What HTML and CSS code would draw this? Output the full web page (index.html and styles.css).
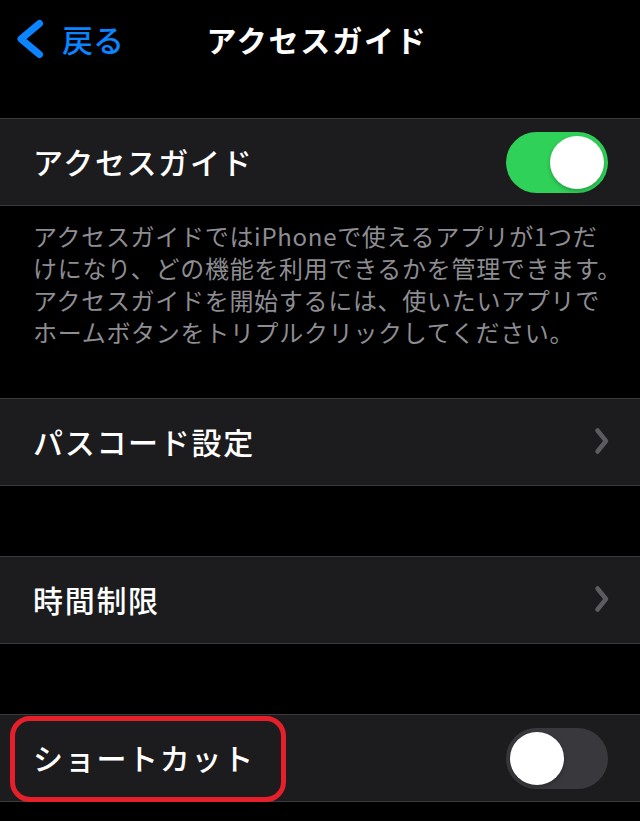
FILE: index.html
```html
<!DOCTYPE html>
<html lang="ja">
<head>
    <meta charset="UTF-8">
    <meta name="viewport" content="width=device-width, initial-scale=1.0">
    <title>アクセスガイド</title>
    <link rel="stylesheet" href="styles.css">
</head>
<body>
    <div class="nav">
        <div class="back">
            <svg class="back-icon" width="32" height="44" viewBox="0 0 32 44">
                <polyline points="25.5,6.5 7,22 25.5,37.5" />
            </svg>
            <span>戻る</span>
        </div>
        <div class="nav-title">アクセスガイド</div>
        <div></div>
    </div>

    <div class="group first">
        <div class="row">
            <span class="label">アクセスガイド</span>
            <div class="switch on"><div class="knob"></div></div>
        </div>
    </div>

    <div class="footer">
        アクセスガイドではiPhoneで使えるアプリが1つだ<br>
        けになり、どの機能を利用できるかを管理できます。<br>
        アクセスガイドを開始するには、使いたいアプリで<br>
        ホームボタンをトリプルクリックしてください。
    </div>

    <div class="group">
        <div class="row">
            <span class="label">パスコード設定</span>
            <svg class="chevron" width="18" height="30" viewBox="0 0 18 30">
                <polyline points="4.5,4.5 13,15 4.5,25.5" />
            </svg>
        </div>
    </div>

    <div class="spacer"></div>

    <div class="group">
        <div class="row">
            <span class="label">時間制限</span>
            <svg class="chevron" width="18" height="30" viewBox="0 0 18 30">
                <polyline points="4.5,4.5 13,15 4.5,25.5" />
            </svg>
        </div>
    </div>

    <div class="spacer"></div>

    <div class="group">
        <div class="row highlighted">
            <span class="label">ショートカット</span>
            <div class="switch"><div class="knob"></div></div>
            <div class="mark"></div>
        </div>
    </div>
</body>
</html>
```

FILE: styles.css
```css
* {
    box-sizing: border-box;
    margin: 0;
    padding: 0;
}

body {
    font-family: "Noto Sans CJK JP", "Noto Sans", sans-serif;
    background-color: #000000;
    color: #ffffff;
    width: 640px;
    min-height: 821px;
    overflow: hidden;
}

.nav {
    height: 80px;
    display: grid;
    grid-template-columns: 1fr auto 1fr;
    align-items: center;
}

.back {
    display: flex;
    align-items: center;
    padding-left: 14px;
    color: #0a84ff;
    font-size: 31px;
    font-weight: 500;
    gap: 16px;
    margin-top: -3px;
}

.back-icon polyline {
    fill: none;
    stroke: #0a84ff;
    stroke-width: 7;
    stroke-linecap: round;
    stroke-linejoin: round;
}

.nav-title {
    font-size: 30px;
    font-weight: 700;
    letter-spacing: 1.8px;
    margin-top: -3px;
    margin-left: -6px;
}

.group.first {
    margin-top: 38px;
}

.row {
    position: relative;
    height: 88px;
    background-color: #1c1c1e;
    border-top: 1px solid #3a3a3c;
    border-bottom: 1px solid #3a3a3c;
    display: flex;
    align-items: center;
    justify-content: space-between;
    padding: 0 32px 0 33px;
}

.label {
    font-size: 30px;
    font-weight: 500;
    letter-spacing: 1.7px;
    margin-top: -3px;
}

.switch {
    width: 102px;
    height: 61px;
    border-radius: 31px;
    background-color: #39393d;
    padding: 4px;
    display: flex;
}

.switch.on {
    background-color: #30d158;
    justify-content: flex-end;
}

.knob {
    width: 54px;
    height: 53px;
    border-radius: 50%;
    background-color: #ffffff;
    box-shadow: 0 2px 4px rgba(0, 0, 0, 0.25);
}

.chevron {
    margin-right: -3px;
    margin-top: -2px;
}

.chevron polyline {
    fill: none;
    stroke: #5c5c60;
    stroke-width: 4.5;
    stroke-linecap: round;
    stroke-linejoin: round;
}

.footer {
    height: 192px;
    padding: 14px 10px 0 33px;
    font-size: 24px;
    line-height: 32px;
    letter-spacing: 0.7px;
    color: #8d8d93;
    white-space: nowrap;
}

.spacer {
    height: 70px;
}

.mark {
    position: absolute;
    left: 10px;
    top: 1px;
    width: 276px;
    height: 86px;
    border: 5px solid #e5202a;
    border-radius: 20px;
}
```
